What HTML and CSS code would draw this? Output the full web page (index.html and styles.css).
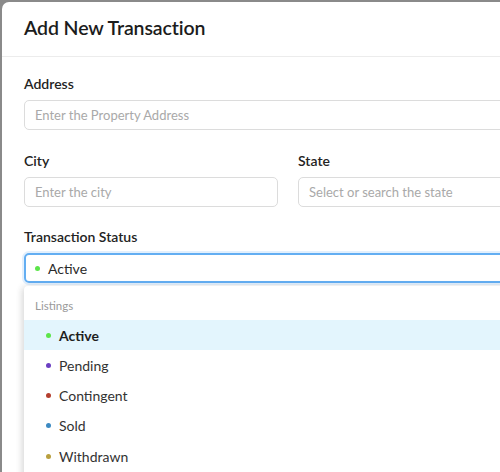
FILE: index.html
```html
<!DOCTYPE html>
<html>
<head>
<meta charset="utf-8">
<link rel="stylesheet" href="styles.css">
</head>
<body>
<div class="backdrop">
  <div class="modal">
    <div class="modal-header">
      <h2 class="title">Add New Transaction</h2>
    </div>
    <div class="modal-body">
      <div class="field">
        <label class="label">Address</label>
        <div class="input"><span class="placeholder">Enter the Property Address</span></div>
      </div>
      <div class="row">
        <div class="field">
          <label class="label">City</label>
          <div class="input"><span class="placeholder">Enter the city</span></div>
        </div>
        <div class="field">
          <label class="label">State</label>
          <div class="input"><span class="placeholder">Select or search the state</span></div>
        </div>
      </div>
      <div class="field status">
        <label class="label">Transaction Status</label>
        <div class="select-wrap">
          <div class="input select focused"><span class="dot green"></span><span class="value">Active</span></div>
          <div class="menu">
            <div class="group-label">Listings</div>
            <div class="option selected"><span class="dot green"></span>Active</div>
            <div class="option"><span class="dot purple"></span>Pending</div>
            <div class="option"><span class="dot red"></span>Contingent</div>
            <div class="option"><span class="dot blue"></span>Sold</div>
            <div class="option"><span class="dot olive"></span>Withdrawn</div>
          </div>
        </div>
      </div>
    </div>
  </div>
</div>
</body>
</html>
```
FILE: styles.css
```css
html, body {
  margin: 0;
  padding: 0;
  width: 500px;
  height: 472px;
  overflow: hidden;
}
body {
  font-family: Lato, "Open Sans", sans-serif;
  color: #222;
}
.backdrop {
  background: #8a8a8a;
  padding: 2px 0 0 2px;
  height: 470px;
  overflow: hidden;
}
.modal {
  width: 576px;
  height: 600px;
  background: #fff;
  border-radius: 7px 0 0 0;
}
.modal-header {
  height: 55px;
  box-sizing: border-box;
  border-bottom: 1px solid #ececec;
  padding: 0 22px 3px 22px;
  display: flex;
  align-items: center;
}
.title {
  margin: 0;
  font-size: 19.5px;
  font-weight: 600;
  color: #1c1c1c;
  letter-spacing: -0.1px;
}
.modal-body {
  padding: 18px 22px 0 22px;
  display: flex;
  flex-direction: column;
  gap: 22px;
}
.status {
  margin-top: -1px;
}
.row {
  display: grid;
  grid-template-columns: 254px 254px;
  column-gap: 20px;
}
.field {
  display: flex;
  flex-direction: column;
  gap: 7px;
}
.label {
  font-size: 14px;
  font-weight: 600;
  color: #232323;
  line-height: 18px;
}
.input {
  height: 30px;
  box-sizing: border-box;
  border: 1px solid #dcdcdc;
  border-radius: 5px;
  display: flex;
  align-items: center;
  padding: 0 10px;
  font-size: 13px;
}
.placeholder {
  color: #a9a9a9;
}
.select-wrap {
  position: relative;
}
.select.focused {
  border: 2px solid #63aef2;
  box-shadow: 0 0 0 2px rgba(99, 174, 242, 0.18);
  padding: 0 9px;
  font-size: 14px;
  color: #2a2a2a;
}
.select .dot {
  margin-right: 8px;
}
.dot {
  display: inline-block;
  width: 5px;
  height: 5px;
  border-radius: 50%;
  flex: none;
}
.green { background: #5ce54a; }
.purple { background: #6b3fc2; }
.red { background: #b43f2f; }
.blue { background: #3c8ac2; }
.olive { background: #b9a03f; }
.menu {
  position: absolute;
  top: 33px;
  left: 0;
  width: 554px;
  height: 200px;
  background: #fff;
  box-shadow: -3px 0 6px rgba(0, 0, 0, 0.08), 0 2px 8px rgba(0, 0, 0, 0.1);
  border-radius: 4px;
  padding-top: 8px;
}
.group-label {
  font-size: 11.5px;
  color: #9a9a9a;
  padding: 0 11px;
  height: 22px;
  display: flex;
  align-items: center;
  margin-bottom: 4px;
}
.option {
  height: 30.25px;
  display: flex;
  align-items: center;
  padding-left: 22px;
  font-size: 14px;
  color: #333;
}
.option .dot {
  margin-right: 8px;
}
.option.selected {
  background: #e3f5fd;
  font-weight: 700;
  color: #1e1e1e;
}
```
